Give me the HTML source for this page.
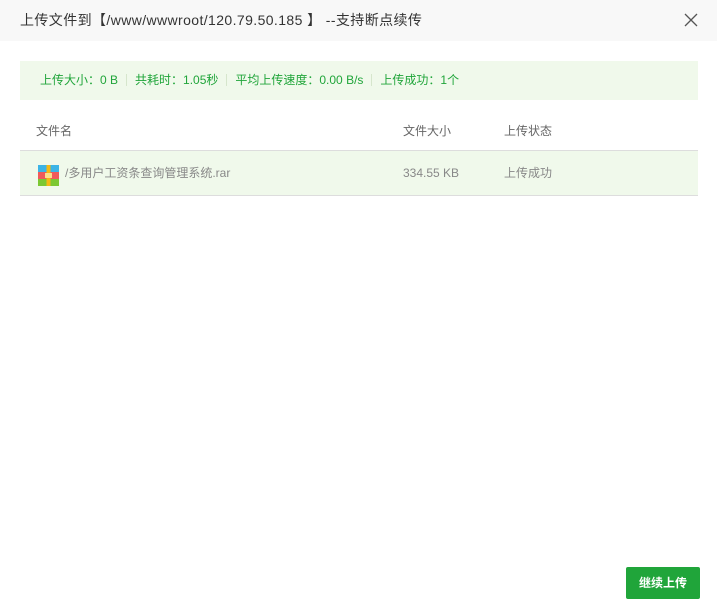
<!DOCTYPE html>
<html><head><meta charset="utf-8"><style>
body{margin:0;width:717px;height:614px;background:#fff;font-family:"Liberation Sans","Noto Sans CJK SC",sans-serif;position:relative;overflow:hidden}
.hd{position:absolute;left:0;top:0;width:717px;height:41px;background:#f8f8f8;font-size:14px;color:#333;line-height:41px}
.hd span{position:absolute;left:20px;letter-spacing:0.4px}
.x{position:absolute;right:18px;top:12px;width:16px;height:16px}
.sum{position:absolute;left:20px;top:61px;width:678px;height:39px;background:#f0f9eb;font-size:12px;color:#20a53a;line-height:39px}
.sum span{display:inline-block;padding:0 8px;border-left:1px solid #d6e6cc;line-height:12px}
.sum span:first-child{border:0;padding-left:20px}
.th{position:absolute;left:20px;top:112px;width:678px;height:38px;border-bottom:1px solid #ddd;font-size:12px;color:#666;line-height:38px}
.tr{position:absolute;left:20px;top:151px;width:678px;height:44px;border-bottom:1px solid #ddd;background:#f0f9eb;font-size:12px;color:#888;line-height:44px}
.c1{position:absolute;left:16px}.c2{position:absolute;left:383px}.c3{position:absolute;left:484px}
.btn{position:absolute;left:626px;top:567px;width:74px;height:32px;background:#20a53a;color:#fff;font-size:12px;font-weight:bold;text-align:center;line-height:32px;border-radius:2px}
</style></head><body>
<div class="hd"><span>上传文件到【/www/wwwroot/120.79.50.185 】 --支持断点续传</span>
<svg class="x" viewBox="0 0 16 16"><path d="M2 2L14 14M14 2L2 14" stroke="#555" stroke-width="1.3"/></svg></div>
<div class="sum"><span>上传大小：0 B</span><span>共耗时：1.05秒</span><span>平均上传速度：0.00 B/s</span><span>上传成功：1个</span></div>
<div class="th"><span class="c1">文件名</span><span class="c2">文件大小</span><span class="c3">上传状态</span></div>
<div class="tr"><span class="c1" style="left:18px;top:14px;line-height:0"><svg width="21" height="21" viewBox="0 0 21 21"><rect width="21" height="7" fill="#3cb4e6"/><rect y="7" width="21" height="7" fill="#f05a5a"/><rect y="14" width="21" height="7" fill="#7cc832"/><rect x="8.5" width="4" height="21" fill="#f5b914"/><rect x="7" y="8" width="7" height="5" fill="#fde08a"/></svg></span><span class="c1" style="left:45px">/多用户工资条查询管理系统.rar</span><span class="c2">334.55 KB</span><span class="c3">上传成功</span></div>
<div class="btn">继续上传</div>
</body></html>
